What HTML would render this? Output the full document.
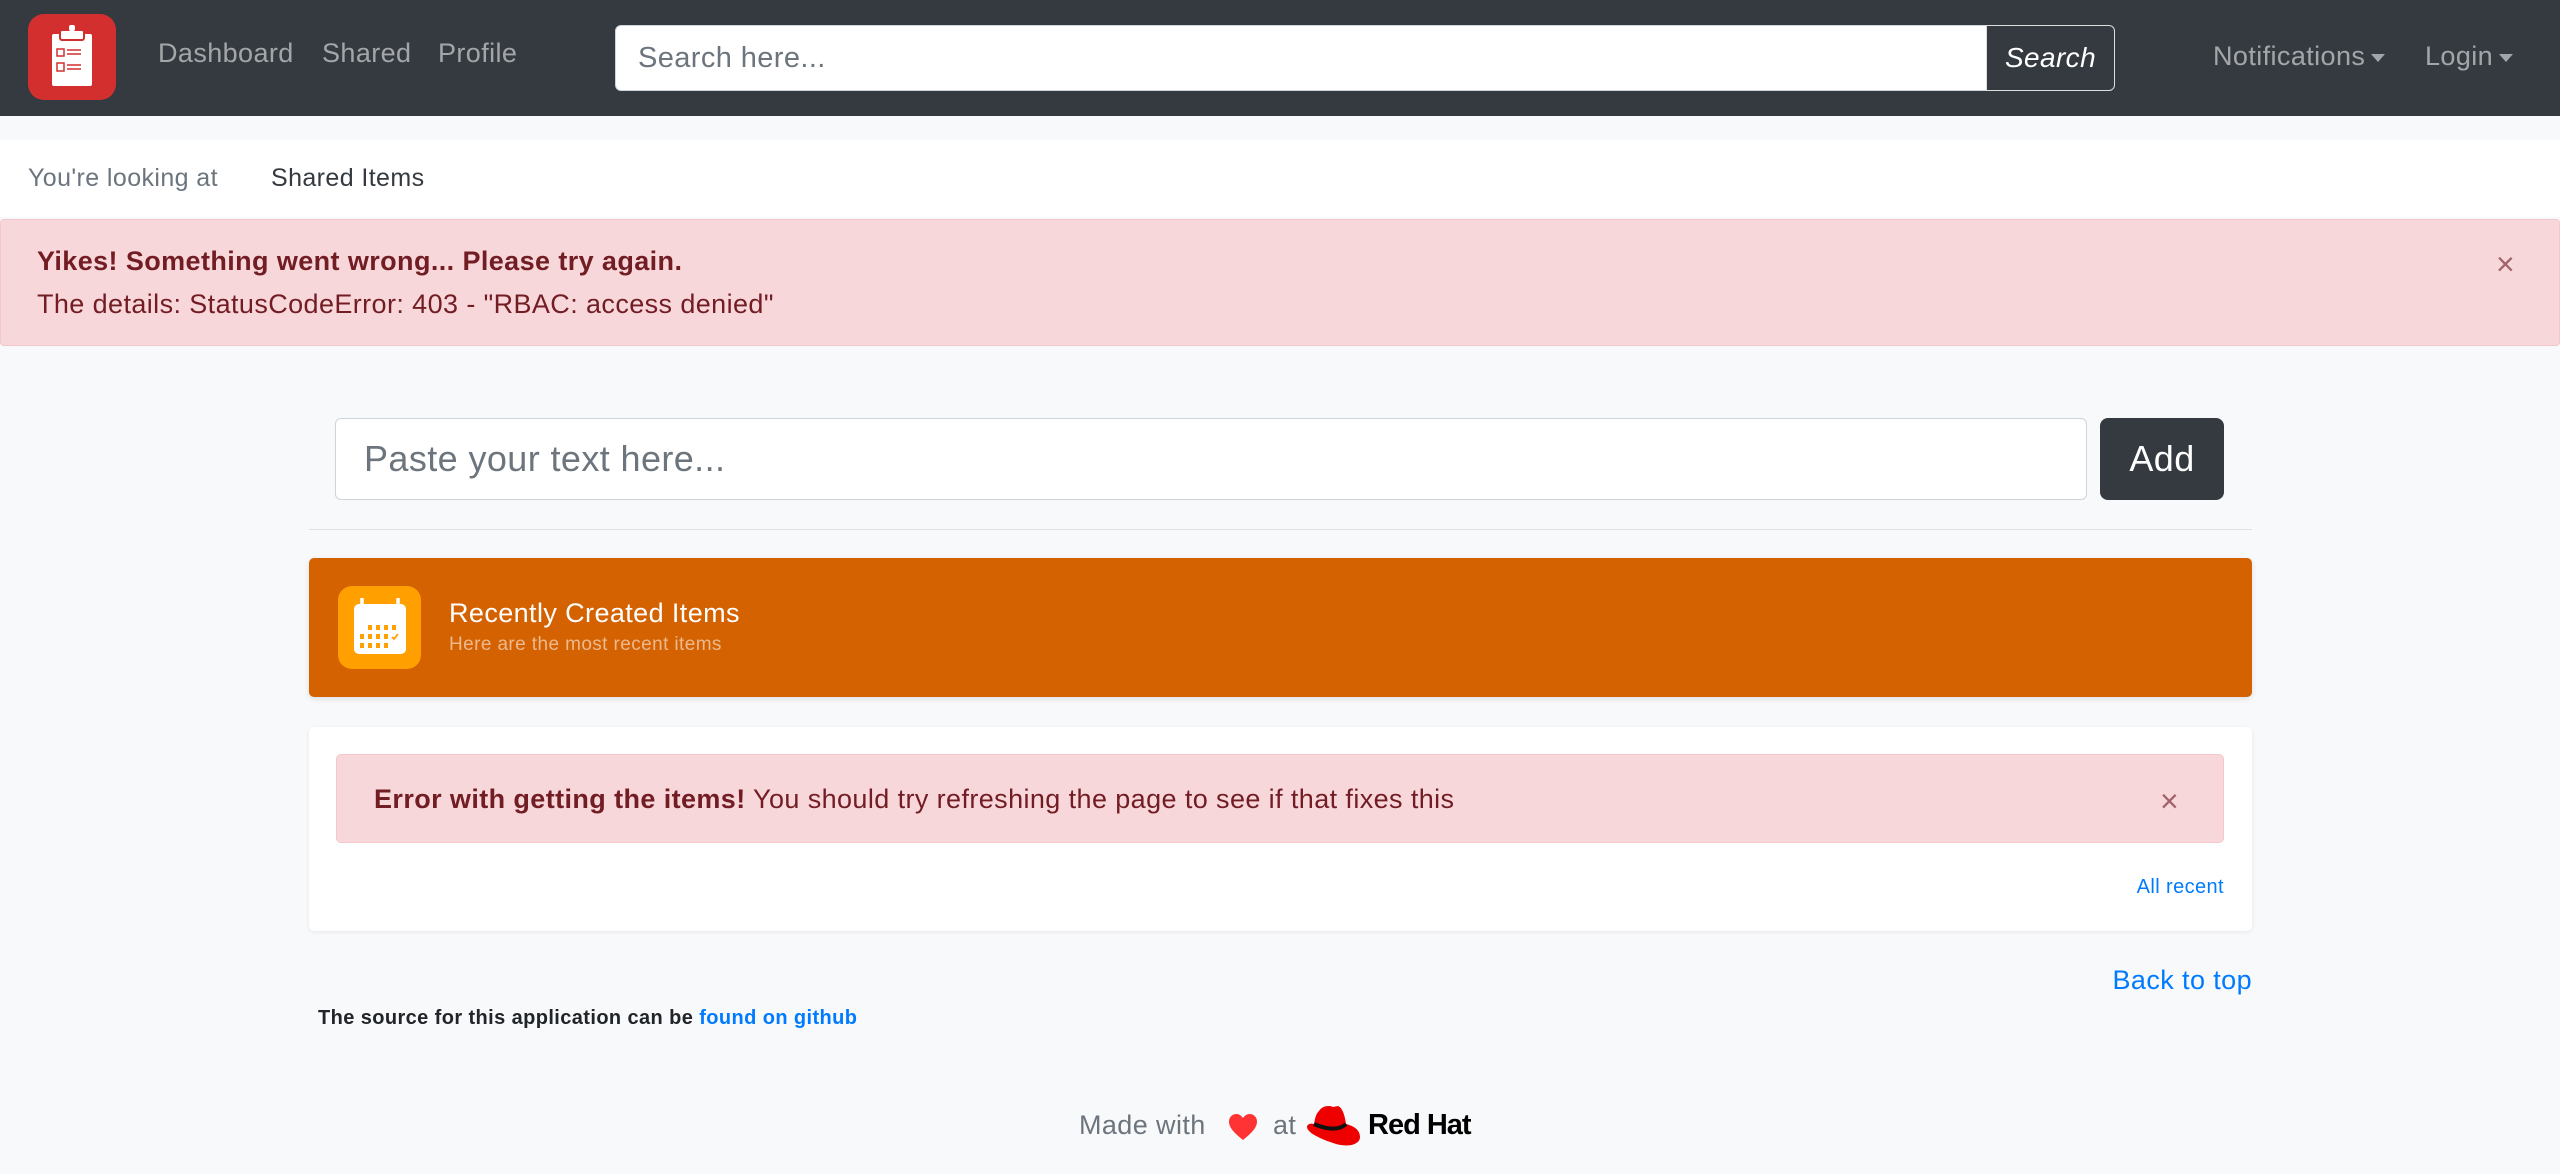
<!DOCTYPE html>
<html><head><meta charset="utf-8"><style>
*{box-sizing:border-box;margin:0;padding:0}
body{width:2560px;height:1174px;background:#f8f9fa;font-family:"Liberation Sans",sans-serif;position:relative;overflow:hidden;letter-spacing:0.4px}
.a{position:absolute;white-space:nowrap}
nav{position:absolute;left:0;top:0;width:2560px;height:116px;background:#343a40}
.nl{color:rgba(255,255,255,.55);font-size:27px;top:38px}
.car{display:inline-block;width:0;height:0;border-left:7px solid transparent;border-right:7px solid transparent;border-top:8px solid rgba(255,255,255,.55);vertical-align:middle;margin-left:6px}
</style></head><body>
<nav>
 <div class="a" style="left:28px;top:14px;width:88px;height:86px;background:#d32f2f;border-radius:16px">
  <svg width="88" height="86" viewBox="0 0 88 86"><rect x="24" y="20" width="40" height="52" rx="2" fill="#fff"/><rect x="32" y="16" width="24" height="10" rx="2" fill="#fff" stroke="#d32f2f" stroke-width="2"/><rect x="41" y="11" width="6" height="6" rx="2" fill="#fff"/><rect x="29" y="35" width="7" height="7" fill="none" stroke="#d32f2f" stroke-width="1.5"/><path d="M39 36h14M39 40h14M39 51h14M39 55h14" stroke="#d32f2f" stroke-width="1.5"/><rect x="29" y="49" width="7" height="8" fill="none" stroke="#d32f2f" stroke-width="1.5"/></svg>
 </div>
 <div class="a nl" style="left:158px">Dashboard</div>
 <div class="a nl" style="left:322px">Shared</div>
 <div class="a nl" style="left:438px">Profile</div>
 <div class="a" style="left:615px;top:25px;width:1372px;height:66px;background:#fff;border-radius:6px 0 0 6px;border:1px solid #ced4da;color:#6c757d;font-size:29px;padding:16px 22px">Search here...</div>
 <div class="a" style="left:1986px;top:25px;width:129px;height:66px;border:1px solid #ddd;border-radius:0 6px 6px 0;color:#fff;font-style:italic;font-size:28px;text-align:center;line-height:64px">Search</div>
 <div class="a nl" style="left:2213px;top:41px">Notifications<span class="car"></span></div>
 <div class="a nl" style="left:2425px;top:41px">Login<span class="car"></span></div>
</nav>
<div class="a" style="left:0;top:140px;width:2560px;height:77px;background:#fff"></div>
<div class="a" style="left:28px;top:164px;font-size:25px;color:#6c757d">You're looking at</div>
<div class="a" style="left:271px;top:164px;font-size:25px;color:#343a40">Shared Items</div>
<div class="a" style="left:0;top:219px;width:2560px;height:127px;background:#f8d7da;border:1px solid #f5c6cb;border-radius:4px"></div>
<div class="a" style="left:37px;top:246px;font-size:27px;font-weight:bold;color:#721c24">Yikes! Something went wrong... Please try again.</div>
<div class="a" style="left:37px;top:289px;font-size:27px;color:#721c24">The details: StatusCodeError: 403 - "RBAC: access denied"</div>
<div class="a" style="left:2496px;top:246px;font-size:32px;color:#a0636a">×</div>

<div class="a" style="left:335px;top:418px;width:1752px;height:82px;background:#fff;border:1px solid #ced4da;border-radius:6px;font-size:36px;color:#6c757d;padding:19px 28px">Paste your text here...</div>
<div class="a" style="left:2100px;top:418px;width:124px;height:82px;background:#343a40;border-radius:8px;color:#fff;font-size:36px;text-align:center;line-height:82px">Add</div>
<div class="a" style="left:309px;top:529px;width:1943px;height:1px;background:#dee2e6"></div>

<div class="a" style="left:309px;top:558px;width:1943px;height:139px;background:#d46200;border-radius:5px;box-shadow:0 2px 6px rgba(0,0,0,.1)"></div>
<div class="a" style="left:338px;top:586px;width:83px;height:83px;background:#ff9f00;border-radius:14px">
 <svg width="83" height="83" viewBox="0 0 83 83"><rect x="16" y="18" width="52" height="50" rx="5" fill="#fff"/><path d="M24 12v13M60 12v13" stroke="#fff" stroke-width="3.5"/><g fill="#ff9f00"><rect x="30" y="39" width="4" height="5"/><rect x="38" y="39" width="4" height="5"/><rect x="46" y="39" width="4" height="5"/><rect x="54" y="39" width="4" height="5"/><rect x="22" y="48" width="4" height="5"/><rect x="30" y="48" width="4" height="5"/><rect x="38" y="48" width="4" height="5"/><rect x="46" y="48" width="4" height="5"/><rect x="22" y="57" width="4" height="5"/><rect x="30" y="57" width="4" height="5"/><rect x="38" y="57" width="4" height="5"/><rect x="46" y="57" width="4" height="5"/></g><path d="M54 51l2 2 4-5" stroke="#ff9f00" stroke-width="1.8" fill="none"/></svg>
</div>
<div class="a" style="left:449px;top:598px;font-size:27px;color:#fff">Recently Created Items</div>
<div class="a" style="left:449px;top:634px;font-size:19px;color:rgba(255,255,255,.55)">Here are the most recent items</div>

<div class="a" style="left:309px;top:727px;width:1943px;height:204px;background:#fff;border-radius:5px;box-shadow:0 1px 4px rgba(0,0,0,.08)"></div>
<div class="a" style="left:336px;top:754px;width:1888px;height:89px;background:#f8d7da;border:1px solid #f5c6cb;border-radius:5px"></div>
<div class="a" style="left:374px;top:784px;font-size:27px;color:#721c24"><b>Error with getting the items!</b> You should try refreshing the page to see if that fixes this</div>
<div class="a" style="left:2160px;top:783px;font-size:32px;color:#a0636a">×</div>
<div class="a" style="right:336px;top:876px;font-size:20px;color:#007bff">All recent</div>

<div class="a" style="right:308px;top:965px;font-size:27px;color:#007bff">Back to top</div>
<div class="a" style="left:318px;top:1007px;font-size:20px;font-weight:bold;color:#212529">The source for this application can be <span style="color:#007bff">found on github</span></div>

<div class="a" style="left:1079px;top:1110px;font-size:27px;color:#6c757d">Made with</div>
<svg class="a" style="left:1228px;top:1113px" width="30" height="28" viewBox="0 0 30 28"><path d="M15 27C5 19 1 14 1 8.5 1 4 4.5 1 8.5 1 11.5 1 13.5 3 15 5 16.5 3 18.5 1 21.5 1 25.5 1 29 4 29 8.5 29 14 25 19 15 27Z" fill="#f33"/></svg>
<div class="a" style="left:1273px;top:1110px;font-size:27px;color:#6c757d">at</div>
<svg class="a" style="left:1305px;top:1105px" width="58" height="44" viewBox="0 0 58 44"><path d="M14 6C17 1 24 0 28 2L33 1C38 3 40 12 41 19 49 21 55 25 55 32 55 40 42 43 28 38 13 33 2 27 2 22 2 19 6 18 9 19L10 14C11 10 12 8 14 6Z" fill="#e00"/><path d="M9 19C18 23 33 27 41 19" stroke="#111" stroke-width="4" fill="none"/></svg>
<div class="a" style="left:1368px;top:1109px;font-size:29px;font-weight:bold;color:#000;letter-spacing:-1px">Red Hat</div>
</body></html>
